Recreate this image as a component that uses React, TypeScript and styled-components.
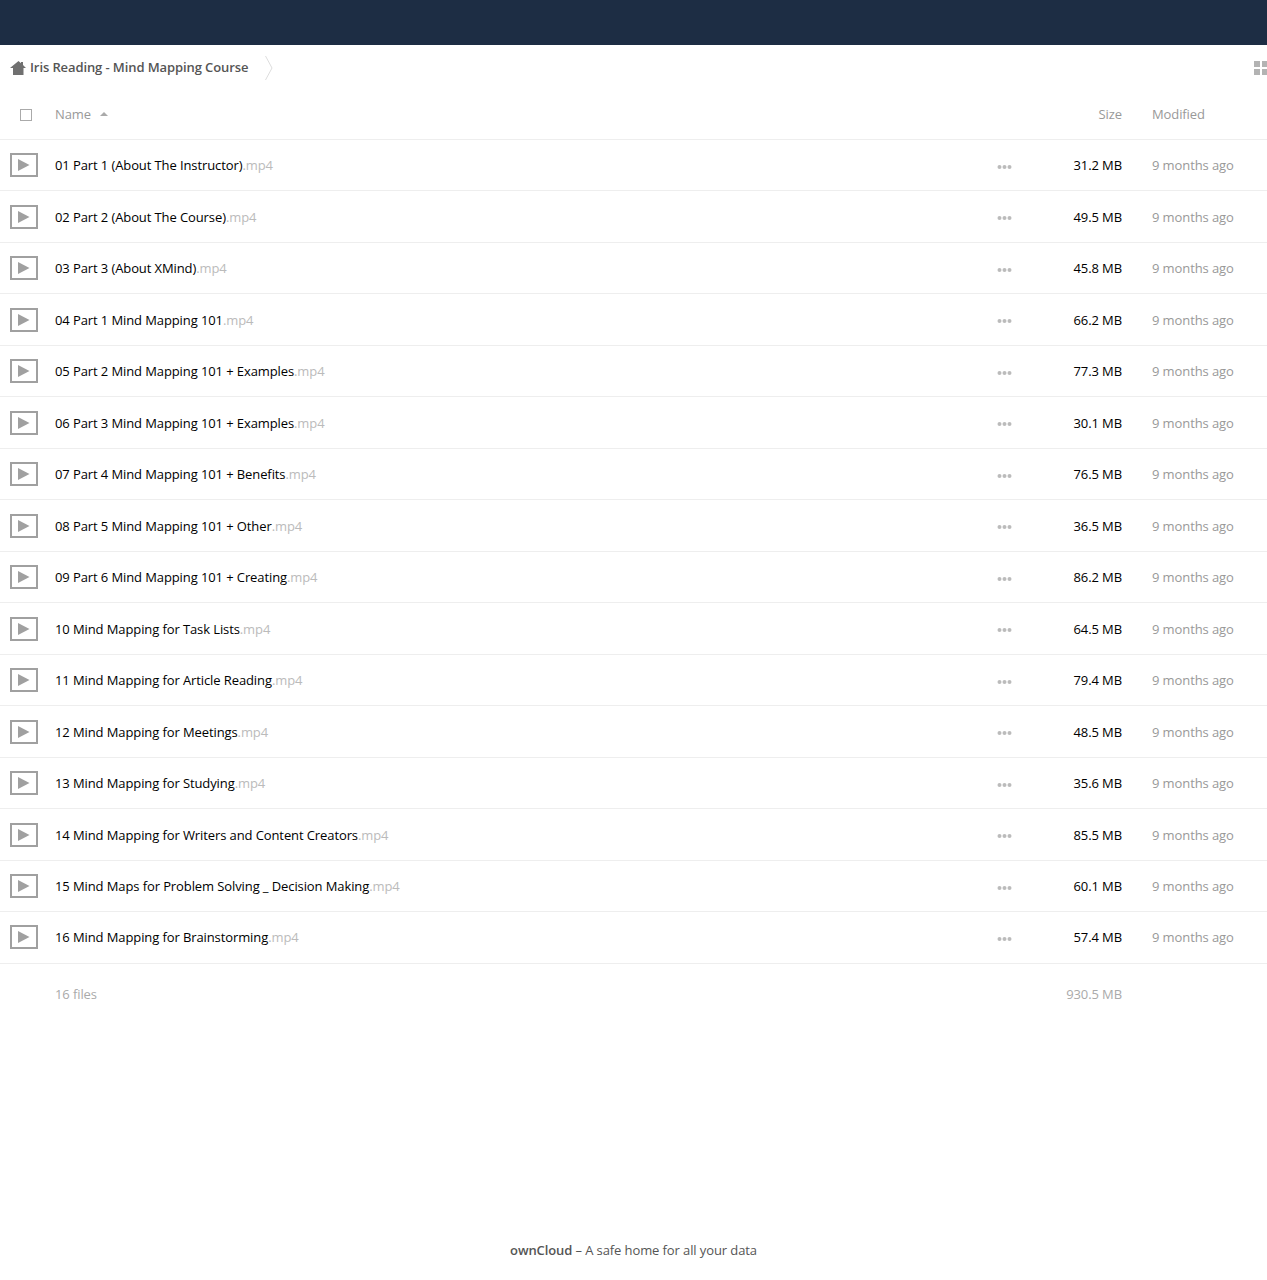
import React from "react";
import styled, { createGlobalStyle } from "styled-components";

const Global = createGlobalStyle`
  html, body { margin: 0; padding: 0; background: #fff; }
  body { font-family: "Open Sans", "Liberation Sans", sans-serif; font-size: 13px; color: #000; letter-spacing: -0.1px; }
`;

const Page = styled.div`
  height: 1280px;
  display: flex;
  flex-direction: column;
  overflow: hidden;
`;
const TopBar = styled.header`
  height: 45px;
  flex: none;
  background: #1d2d44;
`;
const Controls = styled.nav`
  height: 45px;
  flex: none;
  display: flex;
  align-items: center;
  padding-left: 10px;
`;
const Crumb = styled.span`
  margin-left: 4px;
  font-weight: 600;
  color: #555;
  line-height: 45px;
`;
const Chevron = styled.svg`
  margin-left: 17px;
  flex: none;
`;
const ViewToggle = styled.svg`
  margin-left: auto;
  margin-right: -1px;
  flex: none;
`;
const columns = `grid-template-columns: 55px 1fr 30px 110px 30px 115px;`;
const HeaderRow = styled.div`
  display: grid;
  ${columns}
  height: 49.5px;
  box-sizing: border-box;
  border-bottom: 1px solid #eee;
  align-items: center;
  color: #999;
`;
const CheckCell = styled.span`
  padding-left: 20px;
  padding-top: 1px;
  display: flex;
`;
const Checkbox = styled.span`
  width: 10px;
  height: 10px;
  border: 1px solid #aaa;
  display: block;
`;
const NameHead = styled.span`
  display: flex;
  align-items: center;
  gap: 9px;
`;
const SizeCell = styled.span<{ $muted?: boolean }>`
  grid-column: 4;
  text-align: right;
  color: ${(p) => (p.$muted ? "#aaa" : "#000")};
`;
const HeadSize = styled(SizeCell)`
  color: #999;
`;
const ModifiedCell = styled.span`
  grid-column: 6;
  color: #999;
`;
const Row = styled.div`
  display: grid;
  ${columns}
  height: 51.5px;
  box-sizing: border-box;
  padding-top: 0.5px;
  border-bottom: 1px solid #eee;
  align-items: center;

  &:nth-last-child(2) {
    padding-bottom: 0.5px;
  }
`;
const Thumb = styled.svg`
  margin-left: 10px;
  display: block;
`;
const Name = styled.span`
  color: #000;
  white-space: nowrap;
`;
const Ext = styled.span`
  color: #bbb;
`;
const Dots = styled.svg`
  grid-column: 3;
  justify-self: end;
  display: block;
  margin-top: 3px;
`;
const Summary = styled.div`
  display: grid;
  ${columns}
  height: 61px;
  align-items: center;
  color: #aaa;
`;
const SummaryName = styled.span`
  grid-column: 2;
`;
const Footer = styled.footer`
  margin-top: auto;
  height: 60px;
  text-align: center;
  color: #555;
  line-height: 60px;
`;
const Brand = styled.strong`
  font-weight: 600;
`;

const files: [string, string][] = [
  ["01 Part 1 (About The Instructor)", "31.2 MB"],
  ["02 Part 2 (About The Course)", "49.5 MB"],
  ["03 Part 3 (About XMind)", "45.8 MB"],
  ["04 Part 1 Mind Mapping 101", "66.2 MB"],
  ["05 Part 2 Mind Mapping 101 + Examples", "77.3 MB"],
  ["06 Part 3 Mind Mapping 101 + Examples", "30.1 MB"],
  ["07 Part 4 Mind Mapping 101 + Benefits", "76.5 MB"],
  ["08 Part 5 Mind Mapping 101 + Other", "36.5 MB"],
  ["09 Part 6 Mind Mapping 101 + Creating", "86.2 MB"],
  ["10 Mind Mapping for Task Lists", "64.5 MB"],
  ["11 Mind Mapping for Article Reading", "79.4 MB"],
  ["12 Mind Mapping for Meetings", "48.5 MB"],
  ["13 Mind Mapping for Studying", "35.6 MB"],
  ["14 Mind Mapping for Writers and Content Creators", "85.5 MB"],
  ["15 Mind Maps for Problem Solving _ Decision Making", "60.1 MB"],
  ["16 Mind Mapping for Brainstorming", "57.4 MB"],
];

export default function App() {
  return (
    <Page>
      <Global />
      <TopBar />
      <Controls>
        <svg width="16" height="16" viewBox="0 0 16 16">
          <path d="M8.5 1 L11 3.2 V2 H13 V5 L16 8 H13.5 V15 H3 V8 H0 Z" fill="#707070" />
        </svg>
        <Crumb>Iris Reading - Mind Mapping Course</Crumb>
        <Chevron width="8" height="26" viewBox="0 0 8 26">
          <path d="M0.5 1 L7 13 L0.5 25" fill="none" stroke="#ddd" />
        </Chevron>
        <ViewToggle width="14" height="14" viewBox="0 0 14 14">
          <path d="M0 0h6v6H0zM8 0h6v6H8zM0 8h6v6H0zM8 8h6v6H8z" fill="#b3b3b3" />
        </ViewToggle>
      </Controls>
      <main>
        <HeaderRow>
          <CheckCell>
            <Checkbox />
          </CheckCell>
          <NameHead>
            Name
            <svg width="8" height="4" viewBox="0 0 8 4">
              <path d="M4 0 L8 4 H0 Z" fill="#aaa" />
            </svg>
          </NameHead>
          <HeadSize>Size</HeadSize>
          <ModifiedCell>Modified</ModifiedCell>
        </HeaderRow>
        {files.map(([name, size]) => (
          <Row key={name}>
            <Thumb width="28" height="24" viewBox="0 0 28 24">
              <rect x="1" y="1" width="26" height="22" fill="none" stroke="#a0a0a0" strokeWidth="2" />
              <path d="M8 6 L19.5 12 L8 18 Z" fill="#a0a0a0" />
            </Thumb>
            <Name>
              {name}
              <Ext>.mp4</Ext>
            </Name>
            <Dots width="15" height="4" viewBox="0 0 15 4">
              <circle cx="2.5" cy="2" r="2" fill="#bbb" />
              <circle cx="7.5" cy="2" r="2" fill="#bbb" />
              <circle cx="12.5" cy="2" r="2" fill="#bbb" />
            </Dots>
            <SizeCell>{size}</SizeCell>
            <ModifiedCell>9 months ago</ModifiedCell>
          </Row>
        ))}
        <Summary>
          <SummaryName>16 files</SummaryName>
          <SizeCell $muted>930.5 MB</SizeCell>
        </Summary>
      </main>
      <Footer>
        <Brand>ownCloud</Brand> – A safe home for all your data
      </Footer>
    </Page>
  );
}
